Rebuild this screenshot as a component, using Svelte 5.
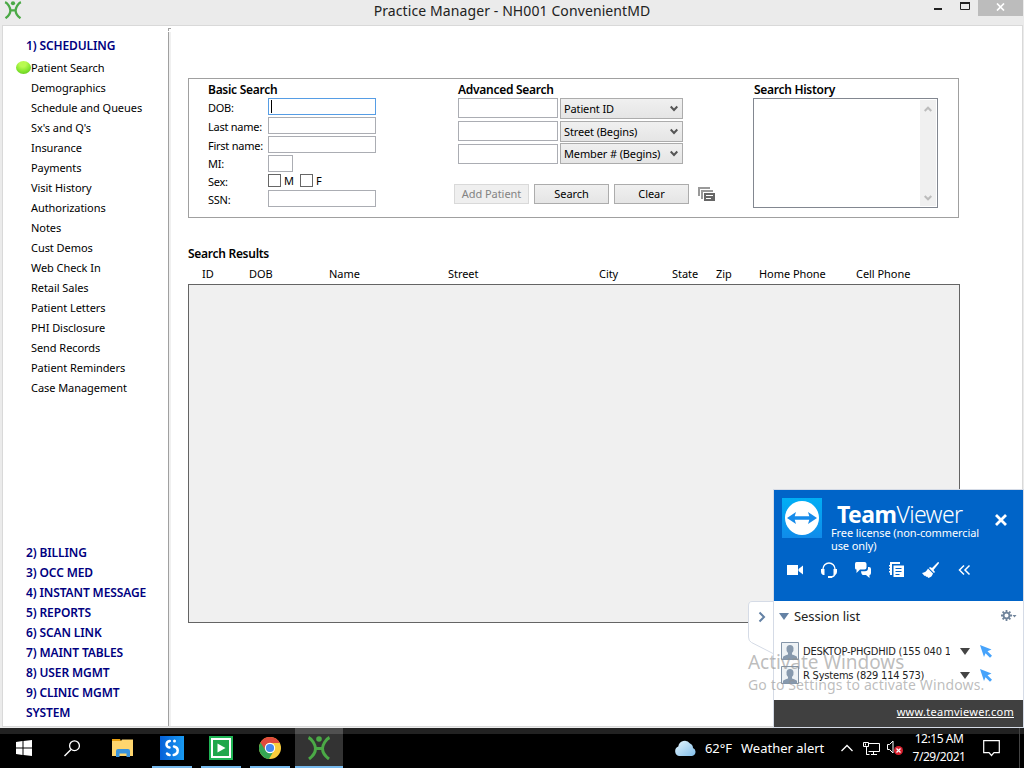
<script>
  const screens = ['Patient Search', 'Demographics', 'Schedule and Queues', "Sx's and Q's", 'Insurance', 'Payments', 'Visit History', 'Authorizations', 'Notes', 'Cust Demos', 'Web Check In', 'Retail Sales', 'Patient Letters', 'PHI Disclosure', 'Send Records', 'Patient Reminders', 'Case Management'];
  const modules = ['2) BILLING', '3) OCC MED', '4) INSTANT MESSAGE', '5) REPORTS', '6) SCAN LINK', '7) MAINT TABLES', '8) USER MGMT', '9) CLINIC MGMT', 'SYSTEM'];
  const criteria = ['Patient ID', 'Street (Begins)', 'Member # (Begins)'];
  const columns = [['ID', 47], ['DOB', 80], ['Name', 119], ['Street', 151], ['City', 73], ['State', 44], ['Zip', 43], ['Home Phone', 97], ['Cell Phone', 80]];
  const sessions = ['DESKTOP-PHGDHID (155 040 1', 'R Systems (829 114 573)'];
</script>

{#snippet figure(size)}
  <svg width={size} height={size} viewBox="0 0 24 24">
    <circle cx="12" cy="3" r="2.800" fill="#4ba946" />
    <path d="M1.500 1.500C5 3 8.500 9 8.500 12.500S6 20 2 23M22.500 1.500C19 3 15.500 9 15.500 12.500S18 20 22 23M8.500 12.500H15.500" fill="none" stroke="#4ba946" stroke-width="3" />
  </svg>
{/snippet}

<div class="desktop">
  <header class="titlebar">
    <span class="logo">{@render figure(18)}</span>
    <span class="title">Practice Manager - NH001 ConvenientMD</span>
    <div class="controls">
      <svg width="40" height="16" viewBox="0 0 40 16"><path d="M0 8h8v2H0z" fill="#222" /><path d="M26.500 3h9v6.500h-9z" fill="none" stroke="#222" /><path d="M26 2h10v2H26z" fill="#222" /></svg>
      <span class="close"><svg width="9" height="8" viewBox="0 0 9 8"><path d="M1 .5l7 7M8 .5l-7 7" stroke="#fff" stroke-width="1.700" /></svg></span>
    </div>
  </header>

  <div class="body">
    <nav>
      <div class="head">1) SCHEDULING</div>
      <ul>
        {#each screens as s, i}
          <li>{#if i === 0}<span class="ball"></span>{/if}{s}</li>
        {/each}
      </ul>
      <div class="modules">
        {#each modules as m}<div class="head">{m}</div>{/each}
      </div>
    </nav>
    <div class="divider"><i></i></div>

    <main>
      <section class="search">
        <div class="basic">
          <h2>Basic Search</h2>
          <div class="row"><label for="dob">DOB:</label><div class="field active" id="dob"><i></i></div></div>
          <div class="row"><label for="last">Last name:</label><div class="field" id="last"></div></div>
          <div class="row"><label for="first">First name:</label><div class="field" id="first"></div></div>
          <div class="row"><label for="mi">MI:</label><div class="field short" id="mi"></div></div>
          <div class="row sex"><span class="lab">Sex:</span><span class="box"></span><span class="opt">M</span><span class="box"></span><span class="opt">F</span></div>
          <div class="row"><label for="ssn">SSN:</label><div class="field" id="ssn"></div></div>
        </div>
        <div class="advanced">
          <h2>Advanced Search</h2>
          <div class="criteria">
            {#each criteria as c}
              <div class="crit"><div class="entry"></div><div class="select"><span>{c}</span><svg width="8" height="7" viewBox="0 0 8 7"><path d="M.7 1.500L4 5 7.300 1.500" fill="none" stroke="#555" stroke-width="2" /></svg></div></div>
            {/each}
          </div>
          <div class="buttons">
            <div class="btn off">Add Patient</div><div class="btn">Search</div><div class="btn">Clear</div>
            <svg width="18" height="15" viewBox="0 0 18 15"><path d="M1 9V1h11M4 12V4h11" fill="none" stroke="#999" stroke-width="2" /><path d="M6 6h11v8H6z" fill="#666" /><path d="M8 8.500h7M8 11.500h5" stroke="#fff" /></svg>
          </div>
        </div>
        <div class="history">
          <h2>Search History</h2>
          <div class="list">
            <div class="scroll">
              <svg width="8" height="6" viewBox="0 0 8 6"><path d="M.7 5L4 1.700 7.300 5" fill="none" stroke="#bcbcbc" stroke-width="2" /></svg>
              <svg width="8" height="6" viewBox="0 0 8 6"><path d="M.7 1L4 4.300 7.300 1" fill="none" stroke="#bcbcbc" stroke-width="2" /></svg>
            </div>
          </div>
        </div>
      </section>

      <h2 class="results-title">Search Results</h2>
      <div class="columns">
        {#each columns as [name, width]}<span style="width: {width}px">{name}</span>{/each}
      </div>
      <div class="results"></div>
    </main>
  </div>

  <footer class="taskbar">
    <span class="cell start"><svg width="16" height="16" viewBox="0 0 16 16"><path d="M0 2l6.500-1v6.500H0zM7.500 1L16 0v7.500H7.500zM0 8.500h6.500V15L0 14zM7.500 8.500H16V16l-8.500-1z" fill="#fff" /></svg></span>
    <span class="cell find"><svg width="16" height="17" viewBox="0 0 16 17"><circle cx="10.500" cy="5.700" r="4.900" fill="none" stroke="#fff" stroke-width="1.300" /><path d="M7 9.500L.5 16" stroke="#fff" stroke-width="1.500" /></svg></span>
    <span class="cell folder"><svg width="22" height="18" viewBox="0 0 22 18"><path d="M0 0h8l1 2H0z" fill="#e9a010" /><path d="M0 2h9l1-1.500h11V17H0z" fill="#ffd66e" /><path d="M4 18v-6q0-2 2-2h10q2 0 2 2v6h-3.500v-3.500h-7V18z" fill="#3a94dc" /></svg></span>
    <span class="cell app on"><svg width="24" height="24" viewBox="0 0 24 24"><defs><linearGradient id="blue"><stop stop-color="#0560d8" /><stop offset="1" stop-color="#199af2" /></linearGradient></defs><path d="M0 0h24v24H0z" fill="url(#blue)" /><path d="M9.800 5Q6.500 5.500 6.500 8.500q0 2.500 3 3M14 10.500q3.700.7 3.700 4 0 3.500-4 4.500M7 17.500q.8 1.300 2.600 1.500" fill="none" stroke="#fff" stroke-width="2.500" stroke-linecap="round" /><circle cx="14.500" cy="5" r="1.500" fill="#fff" /></svg></span>
    <span class="cell app on"><svg width="24" height="24" viewBox="0 0 24 24"><path d="M0 0h24v24H0z" fill="#20b455" /><path d="M3 3h18v18H3z" fill="#20a74b" stroke="#fff" stroke-width="2" /><path d="M8.500 7.500v9l8-4.500z" fill="#fff" /></svg></span>
    <span class="cell app on"><svg width="22" height="22" viewBox="0 0 22 22"><circle cx="11" cy="11" r="11" fill="#f9cd3d" /><path d="M11 11L1.500 5.500A11 11 0 0 0 10 22l5-8.500z" fill="#35a653" /><path d="M11 6h9.800A11 11 0 0 0 1.500 5.500L6.500 13.500A5 5 0 0 1 11 6z" fill="#e04a3c" /><circle cx="11" cy="11" r="5.200" fill="#fff" /><circle cx="11" cy="11" r="4.100" fill="#4688f1" /></svg></span>
    <span class="cell current on">{@render figure(24)}</span>
    <div class="tray">
      <svg class="cloud" width="22" height="17" viewBox="0 0 22 17"><defs><linearGradient id="sky" x2="1" y2="1"><stop stop-color="#e6f7ff" /><stop offset="1" stop-color="#81bde9" /></linearGradient></defs><path d="M5 16a5 5 0 0 1-.7-9.500A6.500 6.500 0 0 1 16 3.500a5 5 0 0 1 3 4.500A4.200 4.200 0 0 1 18 16z" fill="url(#sky)" /></svg>
      <span class="temp">62°F</span><span class="alert">Weather alert</span>
      <svg class="up" width="12" height="8" viewBox="0 0 12 8"><path d="M.5 7L6 1.500 11.500 7" fill="none" stroke="#fff" stroke-width="1.300" /></svg>
      <svg class="net" width="17" height="15" viewBox="0 0 17 15"><path d="M5.500 2.500h11v8h-11M3.500 6v7.500M8 13.500h6M10.500 10.500v3M.5 1.500h5v4h-5z" fill="none" stroke="#fff" /><path d="M2.500 2.500v2M3.500 5.500v8h3" stroke="#fff" fill="none" /></svg>
      <svg class="vol" width="17" height="16" viewBox="0 0 17 16"><path d="M.5 4.500h2L6 1v12L2.500 9.500h-2z" fill="none" stroke="#fff" /><circle cx="11.500" cy="10.500" r="4.500" fill="#d8202e" /><path d="M9.500 8.500l4 4m0-4l-4 4" stroke="#fff" stroke-width="1.200" /></svg>
      <div class="clock"><span>12:15 AM</span><span>7/29/2021</span></div>
      <svg class="note" width="17" height="17" viewBox="0 0 17 17"><path d="M.7.7h15.600v12H11L8.500 15.500 6 12.700H.7z" fill="none" stroke="#fff" stroke-width="1.200" /></svg>
    </div>
  </footer>

  <svg class="tab" width="26" height="56" viewBox="0 0 26 56"><path d="M26 .5H4Q.5.500.500 5V36q0 4 3 5.500L26 53" fill="#fff" stroke="#d5dbe6" /><path d="M11.500 11.500l4.500 4.500-4.500 4.500" fill="none" stroke="#6482a5" stroke-width="2" /></svg>
  <aside class="viewer">
    <div class="hero">
      <div class="brand">
        <svg width="40" height="40" viewBox="0 0 40 40"><defs><linearGradient id="tv" x2="0" y2="1"><stop stop-color="#00aff5" /><stop offset="1" stop-color="#108bea" /></linearGradient></defs><path d="M0 0h40v40H0z" fill="url(#tv)" /><circle cx="20" cy="20" r="17" fill="#fff" /><path d="M5 20l9-6-1.300 4.200h14.600L26 14l9 6-9 6 1.300-4.200H12.700L14 26z" fill="#168bea" /></svg>
        <div class="words"><div class="name"><b>Team</b>Viewer</div><p>Free license (non-commercial<br />use only)</p></div>
        <svg class="x" width="12" height="12" viewBox="0 0 12 12"><path d="M1 1l10 10M11 1L1 11" stroke="#fff" stroke-width="2.800" /></svg>
      </div>
      <div class="tools">
        <svg width="18" height="18" viewBox="0 0 18 18"><path d="M1 4h11v10H1zM12.500 8L17 4.500v9L12.500 10z" fill="#fff" /></svg>
        <svg width="18" height="18" viewBox="0 0 18 18"><path d="M3 10V8a6 6 0 0 1 12 0v2M15 12q0 4-5 4" fill="none" stroke="#fff" stroke-width="1.400" /><path d="M1 8h3.500v6H3q-2-1-2-3zM17 8h-3.500v6H15q2-1 2-3zM8 15h4v2H8z" fill="#fff" /></svg>
        <svg width="18" height="18" viewBox="0 0 18 18"><path d="M2.500 1h8q2 0 2 2v3.500q0 2-2 2H6L2.500 12V8.500Q1 8.500 1 7V3q0-2 1.500-2z" fill="#fff" /><path d="M14 6h1q2 0 2 2v4q0 2-1.500 2v3L12 14H9q-1.500 0-2-3.800h4q3 0 3-3z" fill="#fff" /></svg>
        <svg width="18" height="18" viewBox="0 0 18 18"><path d="M2 1h10v2H4v11H2z" fill="#fff" /><path d="M1 4h3v1.500H1zM1 7h3v1.500H1zM1 10h3v1.500H1z" fill="#fff" /><path d="M5.500 4.500H16V16H5.500z" fill="#fff" /><path d="M7.500 7.500h6M7.500 10.500h6M7.500 13.500h4" stroke="#0064c8" stroke-width="1.200" /></svg>
        <svg width="18" height="18" viewBox="0 0 18 18"><path d="M16 1q2 0 0 2.500L11.500 9l1.500 2-1 1-5-5 1-1 2 1z" fill="#fff" /><path d="M6 7.500l5 5Q10 16 6.500 17L5 15.500 4.500 16 3 14.500l-.5.500L0 12q4-.5 6-4.500z" fill="#fff" /></svg>
        <svg width="18" height="18" viewBox="0 0 18 18"><path d="M8 4.500L3.500 9 8 13.500M13.500 4.500L9 9l4.500 4.500" fill="none" stroke="#fff" stroke-width="1.500" /></svg>
      </div>
    </div>
    <div class="list-head">
      <svg width="10" height="7" viewBox="0 0 10 7"><path d="M0 0h10L5 7z" fill="#6482a5" /></svg>
      <span>Session list</span>
      <svg width="16" height="12" viewBox="0 0 16 12"><circle cx="5.500" cy="5.500" r="2.900" fill="none" stroke="#70849b" stroke-width="1.800" /><path d="M5.500 0v2M5.500 9v2M0 5.500h2M9 5.500h2M1.600 1.600L3 3M8 8l1.400 1.400M9.400 1.600L8 3M3 8L1.600 9.400" stroke="#70849b" stroke-width="1.800" /><path d="M11.500 5h4L13.500 7.500z" fill="#70849b" /></svg>
    </div>
    {#each sessions as s}
      <div class="session">
        <svg width="18" height="18" viewBox="0 0 18 18"><path d="M.5.500h17v17H.5z" fill="#eef2f5" stroke="#8495a8" /><path d="M2 17v-2q0-1 5-2.500V11Q5 9 5.500 6 6 3 9 3t3.500 3Q13 9 11 11v1.500q5 1.500 5 2.500v2z" fill="#8799ad" /></svg>
        <span>{s}</span>
        <svg width="10" height="7" viewBox="0 0 10 7"><path d="M0 0h10L5 7z" fill="#444" /></svg>
        <svg class="arrow" width="12" height="13" viewBox="0 0 12 13"><path d="M0 0l11.500 4.500-4 1.800 4.500 4.500-2 2-4.500-4.500L4 12z" fill="#46a3fb" /></svg>
      </div>
    {/each}
    <div class="site"><span>www.teamviewer.com</span></div>
  </aside>
  <div class="watermark"><div>Activate Windows</div><p>Go to Settings to activate Windows.</p></div>
</div>

<style>
  :global(body) { margin: 0; overflow: hidden; }
  .desktop { position: relative; width: 1024px; height: 768px; display: flex; flex-direction: column; background: #ebebeb; color: #000; font: 11px/16px "Noto Sans", sans-serif; white-space: nowrap; overflow: hidden; }
  svg { display: block; flex: none; }
  h2 { margin: 0; font-size: 12px; line-height: 16px; font-weight: 600; letter-spacing: -0.28px; }
  .titlebar { display: grid; grid-template-columns: 200px 1fr 200px; height: 25px; }
  .logo { padding: 1px 0 0 4px; }
  .title { text-align: center; font-size: 14px; line-height: 21px; color: #222; letter-spacing: 0.1px; }
  .controls { display: flex; justify-content: flex-end; gap: 4px; padding-right: 1px; }
  .close { display: flex; width: 45px; height: 16px; align-items: center; justify-content: center; background: #bcbcbc; }
  .close svg { margin-top: -3px; }
  .body { display: flex; height: 700px; margin: 0 1px 0 2px; border: 1px solid #d9d9d9; background: #fff; box-sizing: content-box; }
  nav { width: 165px; display: flex; flex-direction: column; box-sizing: border-box; padding: 10px 0 3px 23px; height: 700px; }
  .head { font-size: 12px; font-weight: 600; line-height: 20px; color: #000080; letter-spacing: -0.12px; }
  ul { list-style: none; margin: 2px 0 0; padding: 0 0 0 5px; }
  li { position: relative; line-height: 20px; letter-spacing: -0.06px; }
  .ball { position: absolute; left: -15px; top: 3px; width: 15px; height: 13px; border-radius: 50%; background: radial-gradient(circle at 45% 20%, #b9fa50 0 25%, #83e52e 60%, #55b81c); }
  .modules { margin-top: auto; }
  .divider { width: 1px; margin-top: 6px; border-right: 2px solid #f0f0f0; background: #a0a0a0; }
  .divider i { display: block; box-sizing: border-box; width: 3px; height: 3px; margin-top: -4px; border: solid #a0a0a0; border-width: 1px 0 0 1px; }
  main { padding: 52px 0 0 17px; }
  .search { display: flex; width: 769px; height: 138px; border: 1px solid #a0a0a0; }
  .basic { padding: 3px 0 0 19px; width: 231px; }
  .row { display: flex; align-items: flex-start; height: 19px; line-height: 20px; }
  label, .lab { width: 60px; letter-spacing: -0.25px; }
  .field { box-sizing: border-box; width: 108px; height: 17px; border: 1px solid #abadb3; padding: 1px 2px; }
  .field.short { width: 25px; }
  .field.active { border-color: #569de5; }
  .field i { display: block; width: 1px; height: 13px; background: #000; }
  .row:nth-of-type(4) { height: 18px; line-height: 18px; }
  .row.sex { height: 17px; line-height: 18px; }
  .box { box-sizing: border-box; width: 13px; height: 13px; border: 1px solid #666; margin: 1px 3px 0 0; }
  .opt { width: 16px; line-height: 16px; }
  .advanced { width: 295px; padding-top: 3px; margin-left: 19px; }
  .criteria { display: flex; flex-direction: column; gap: 2px; }
  .crit { display: flex; gap: 2px; height: 21px; }
  .crit:last-child { margin-top: -1px; align-items: flex-end; }
  .entry { box-sizing: border-box; width: 100px; height: 20px; border: 1px solid #abadb3; }
  .select { box-sizing: border-box; display: flex; justify-content: space-between; align-items: center; width: 123px; height: 21px; padding: 0 4px 0 3px; border: 1px solid #acacac; background: linear-gradient(#f0f0f0, #e5e5e5); letter-spacing: -0.13px; }
  .buttons { display: flex; align-items: center; gap: 5px; margin: 20px 0 0 -4px; }
  .btn { box-sizing: border-box; width: 75px; height: 20px; border: 1px solid #acacac; background: linear-gradient(#f0f0f0, #e5e5e5); line-height: 18px; text-align: center; letter-spacing: -0.05px; }
  .off { color: #838383; border-color: #d9d9d9; background: #efefef; }
  .buttons svg { margin-left: 4px; }
  .history { padding-top: 3px; }
  .history h2 { padding-left: 1px; }
  .list { box-sizing: border-box; width: 185px; height: 110px; border: 1px solid #828790; padding: 1px; display: flex; justify-content: flex-end; }
  .scroll { width: 16px; background: #f0f0f0; display: flex; flex-direction: column; justify-content: space-between; align-items: center; padding: 6px 0 5px; box-sizing: border-box; }
  .results-title { margin-top: 28px; }
  .columns { display: flex; padding-left: 14px; margin-top: 4px; line-height: 15px; letter-spacing: -0.05px; }
  .results { width: 770px; height: 337px; margin-top: 3px; border: 1px solid #646464; background: #f0f0f0; }
  .taskbar { display: flex; height: 40px; background: linear-gradient(#222 6px, #000 6px); margin-top: 1px; color: #fff; }
  .cell { box-sizing: border-box; display: flex; align-items: center; justify-content: center; width: 48px; }
  .folder { width: 53px; }
  .app { width: 40px; margin-right: 9px; }
  .app:nth-child(4) { margin-left: 3px; }
  .app:nth-child(6) { margin-right: 5px; }
  .on { border-bottom: 2px solid #76b9ed; padding-top: 2px; }
  .current { background: linear-gradient(#505050 6px, #333 6px); }
  .tray { display: flex; align-items: center; margin-left: 331px; font-size: 13px; width: 346px; box-sizing: border-box; border-right: 1px solid #444; }
  .temp { width: 36px; margin-left: 9px; letter-spacing: -0.1px; }
  .alert { width: 84px; margin-right: 16px; }
  .net { margin-left: 10px; }
  .vol { margin-left: 7px; }
  .clock { display: flex; flex-direction: column; align-items: center; width: 52px; margin-left: 9px; font-size: 12px; line-height: 18px; letter-spacing: -0.45px; padding-bottom: 1px; }
  .note { margin-left: 18px; }
  .tab { position: absolute; left: 748px; top: 601px; }
  .viewer { position: absolute; box-sizing: border-box; left: 773px; top: 489px; width: 251px; height: 239px; border: 1px solid #d5dbe6; background: #fff; display: flex; flex-direction: column; }
  .hero { height: 111px; background: #0064c8; color: #fff; }
  .brand { display: flex; padding: 8px 0 0 8px; height: 61px; }
  .words { width: 164px; padding-left: 9px; }
  .name { font-size: 23px; line-height: 32px; padding-left: 6px; letter-spacing: -0.6px; font-weight: 350; }
  .name b { font-weight: 700; letter-spacing: -0.55px; }
  .brand p { margin: -4px 0 0; line-height: 13px; letter-spacing: -0.1px; }
  .x { margin: 16px 0 0; }
  .tools { display: flex; gap: 16px; padding: 2px 0 0 12px; }
  .list-head { display: flex; align-items: center; height: 31px; padding: 0 6px 0 5px; font-size: 13px; gap: 5px; color: #222; }
  .list-head svg { margin-top: -2px; }
  .list-head svg:first-child { margin-top: 0; }
  .list-head span { flex: 1; letter-spacing: -0.1px; margin-top: -2px; }
  .session { display: flex; align-items: center; height: 24px; padding-left: 7px; }
  .list-head + .session { margin-top: 7px; }
  .session span { width: 147px; margin: 1px 10px 0 4px; overflow: hidden; font: 11px/16px "DejaVu Sans Condensed", "DejaVu Sans", sans-serif; letter-spacing: -0.2px; color: #222; }
  .arrow { margin-left: 10px; }
  .site { margin-top: auto; height: 27px; background: #404040; color: #fff; text-align: right; padding-right: 9px; line-height: 24px; text-decoration: underline; letter-spacing: 0.28px; }
  .watermark { position: absolute; left: 748px; top: 650px; color: rgba(145, 145, 145, 0.6); font-size: 19px; line-height: 25px; letter-spacing: -0.05px; }
  .watermark p { margin: 0; font-size: 14px; line-height: 20px; letter-spacing: 0.13px; }
</style>
